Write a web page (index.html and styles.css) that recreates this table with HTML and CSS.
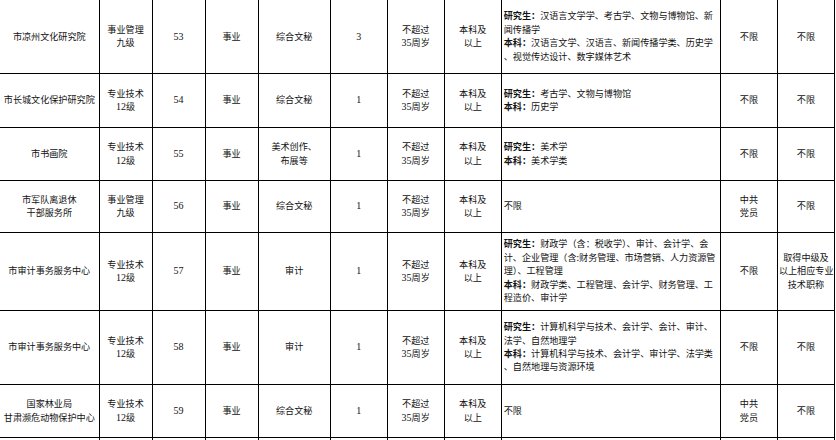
FILE: index.html
```html
<!DOCTYPE html>
<html lang="zh-CN">
<head>
<meta charset="utf-8">
<title>岗位表</title>
<link rel="stylesheet" href="styles.css">
</head>
<body>
<table class="grid">
  <colgroup>
    <col class="c-unit"><col class="c-level"><col class="c-code"><col class="c-type"><col class="c-post"><col class="c-num"><col class="c-age"><col class="c-edu"><col class="c-major"><col class="c-pol"><col class="c-other">
  </colgroup>
  <tbody>
    <tr class="r1">
      <td>市凉州文化研究院</td>
      <td>事业管理<br>九级</td>
      <td class="n">53</td>
      <td>事业</td>
      <td>综合文秘</td>
      <td class="n">3</td>
      <td>不超过<br><span class="n">35</span>周岁</td>
      <td>本科及<br>以上</td>
      <td class="major"><b>研究生：</b>汉语言文学学、考古学、文物与博物馆、新<br>闻传播学<br><b>本科：</b>汉语言文学、汉语言、新闻传播学类、历史学<br>、视觉传达设计、数字媒体艺术</td>
      <td>不限</td>
      <td>不限</td>
    </tr>
    <tr class="r2">
      <td>市长城文化保护研究院</td>
      <td>专业技术<br><span class="n">12</span>级</td>
      <td class="n">54</td>
      <td>事业</td>
      <td>综合文秘</td>
      <td class="n">1</td>
      <td>不超过<br><span class="n">35</span>周岁</td>
      <td>本科及<br>以上</td>
      <td class="major"><b>研究生：</b>考古学、文物与博物馆<br><b>本科：</b>历史学</td>
      <td>不限</td>
      <td>不限</td>
    </tr>
    <tr class="r3">
      <td>市书画院</td>
      <td>专业技术<br><span class="n">12</span>级</td>
      <td class="n">55</td>
      <td>事业</td>
      <td>美术创作、<br>布展等</td>
      <td class="n">1</td>
      <td>不超过<br><span class="n">35</span>周岁</td>
      <td>本科及<br>以上</td>
      <td class="major"><b>研究生：</b>美术学<br><b>本科：</b>美术学类</td>
      <td>不限</td>
      <td>不限</td>
    </tr>
    <tr class="r4">
      <td>市军队离退休<br>干部服务所</td>
      <td>事业管理<br>九级</td>
      <td class="n">56</td>
      <td>事业</td>
      <td>综合文秘</td>
      <td class="n">1</td>
      <td>不超过<br><span class="n">35</span>周岁</td>
      <td>本科及<br>以上</td>
      <td class="major">不限</td>
      <td>中共<br>党员</td>
      <td>不限</td>
    </tr>
    <tr class="r5">
      <td>市审计事务服务中心</td>
      <td>专业技术<br><span class="n">12</span>级</td>
      <td class="n">57</td>
      <td>事业</td>
      <td>审计</td>
      <td class="n">1</td>
      <td>不超过<br><span class="n">35</span>周岁</td>
      <td>本科及<br>以上</td>
      <td class="major"><b>研究生：</b>财政学（含：税收学）、审计、会计学、会<br>计、企业管理（含:财务管理、市场营销、人力资源管<br>理）、工程管理<br><b>本科：</b>财政学类、工程管理、会计学、财务管理、工<br>程造价、审计学</td>
      <td>不限</td>
      <td>取得中级及<br>以上相应专业<br>技术职称</td>
    </tr>
    <tr class="r6">
      <td>市审计事务服务中心</td>
      <td>专业技术<br><span class="n">12</span>级</td>
      <td class="n">58</td>
      <td>事业</td>
      <td>审计</td>
      <td class="n">1</td>
      <td>不超过<br><span class="n">35</span>周岁</td>
      <td>本科及<br>以上</td>
      <td class="major"><b>研究生：</b>计算机科学与技术、会计学、会计、审计、<br>法学、自然地理学<br><b>本科：</b>计算机科学与技术、会计学、审计学、法学类<br>、自然地理与资源环境</td>
      <td>不限</td>
      <td>不限</td>
    </tr>
    <tr class="r7">
      <td>国家林业局<br>甘肃濒危动物保护中心</td>
      <td>专业技术<br><span class="n">12</span>级</td>
      <td class="n">59</td>
      <td>事业</td>
      <td>综合文秘</td>
      <td class="n">1</td>
      <td>不超过<br><span class="n">35</span>周岁</td>
      <td>本科及<br>以上</td>
      <td class="major">不限</td>
      <td>中共<br>党员</td>
      <td>不限</td>
    </tr>
    <tr class="r8">
      <td></td><td></td><td></td><td></td><td></td><td></td><td></td><td></td><td></td><td></td><td></td>
    </tr>
  </tbody>
</table>
</body>
</html>
```

FILE: styles.css
```css
html, body {
  margin: 0;
  padding: 0;
  background: #ffffff;
  overflow: hidden;
}

body {
  width: 836px;
  height: 440px;
  font-family: "Noto Sans CJK SC", "Liberation Serif", sans-serif;
  font-size: 9.1px;
  line-height: 13.4px;
  color: #111111;
}

.grid {
  border-collapse: collapse;
  table-layout: fixed;
  width: 835px;
}

.c-unit { width: 99px; }
.c-level { width: 53px; }
.c-code { width: 53px; }
.c-type { width: 53px; }
.c-post { width: 72px; }
.c-num { width: 57px; }
.c-age { width: 57px; }
.c-edu { width: 57px; }
.c-major { width: 219px; }
.c-pol { width: 57px; }
.c-other { width: 57px; }

.grid td {
  border: 1px solid #000000;
  padding: 0 1px;
  text-align: center;
  vertical-align: middle;
  white-space: nowrap;
  overflow: hidden;
}

.grid tr.r1 td { border-top: none; }
.grid td:first-child { border-left: none; }

.grid td.major {
  text-align: left;
  padding-left: 2px;
}

.grid b {
  font-weight: 700;
}

.n {
  font-family: "Liberation Serif", serif;
  font-size: 10px;
}

.r1 { height: 73px; }
.r2 { height: 54px; }
.r3 { height: 53px; }
.r4 { height: 52px; }
.r5 { height: 78px; }
.r6 { height: 74px; }
.r7 { height: 53px; }
.r8 { height: 20px; }
```
